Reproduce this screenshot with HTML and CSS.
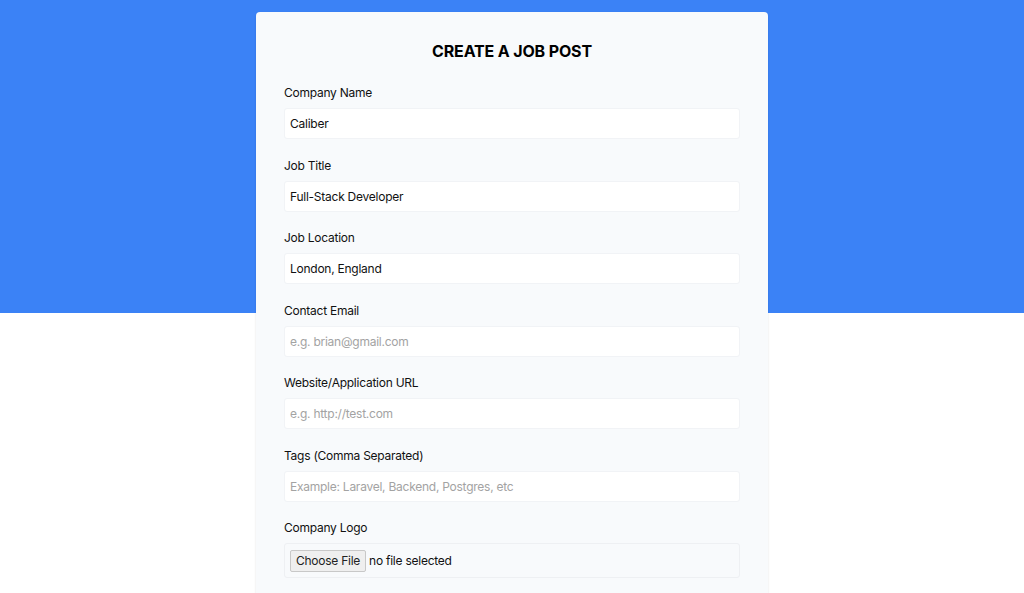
FILE: index.html
```html
<!DOCTYPE html>
<html lang="en">
<head>
<meta charset="utf-8">
<title>Create a Job Post</title>
<link rel="stylesheet" href="styles.css">
</head>
<body>
<main class="page">
  <form class="card">
    <h1 class="title">CREATE A JOB POST</h1>
    <div class="field">
      <label class="label">Company Name</label>
      <div class="input">Caliber</div>
    </div>
    <div class="field">
      <label class="label">Job Title</label>
      <div class="input">Full-Stack Developer</div>
    </div>
    <div class="field">
      <label class="label">Job Location</label>
      <div class="input">London, England</div>
    </div>
    <div class="field">
      <label class="label">Contact Email</label>
      <div class="input placeholder">e.g. brian@gmail.com</div>
    </div>
    <div class="field">
      <label class="label">Website/Application URL</label>
      <div class="input placeholder">e.g. http://test.com</div>
    </div>
    <div class="field">
      <label class="label">Tags (Comma Separated)</label>
      <div class="input placeholder">Example: Laravel, Backend, Postgres, etc</div>
    </div>
    <div class="field">
      <label class="label">Company Logo</label>
      <div class="file">
        <span class="file-btn">Choose File</span>
        <span class="file-text">no file selected</span>
      </div>
    </div>
  </form>
</main>
</body>
</html>
```

FILE: styles.css
```css
html, body {
  margin: 0;
  padding: 0;
}
body {
  background: linear-gradient(to bottom, #3b82f6 0, #3b82f6 313px, #ffffff 313px);
  min-height: 593px;
  font-family: Inter, "Noto Sans", "Liberation Sans", sans-serif;
  color: #111827;
}
.page {
  padding-top: 12px;
  display: flex;
  justify-content: center;
}
.card {
  width: 512px;
  box-sizing: border-box;
  background: #f8fafc;
  border-radius: 4px;
  padding: 25px 28px 40px;
  box-shadow: 0 1px 3px rgba(0,0,0,0.08), 0 1px 2px rgba(0,0,0,0.04);
  display: flex;
  flex-direction: column;
}
.title {
  margin: 0 0 18px;
  text-align: center;
  font-size: 16px;
  line-height: 28px;
  font-weight: 700;
  color: #000;
  letter-spacing: -0.15px;
}
.field {
  display: flex;
  flex-direction: column;
  margin-bottom: 16.5px;
}
.label {
  font-size: 12px;
  line-height: 20px;
  letter-spacing: -0.25px;
  margin-bottom: 5px;
  color: #111;
}
.input {
  height: 31px;
  box-sizing: border-box;
  background: #ffffff;
  border: 1px solid #f1f3f6;
  border-radius: 3px;
  padding: 0 5px;
  font-size: 12px;
  letter-spacing: -0.25px;
  line-height: 29px;
  color: #111;
}
.placeholder {
  color: #a3a3a3;
}
.file {
  height: 35px;
  box-sizing: border-box;
  border: 1px solid #eef0f3;
  border-radius: 3px;
  display: flex;
  align-items: center;
  padding: 0 5px;
  gap: 3px;
  font-size: 12px;
  letter-spacing: -0.25px;
}
.file-btn {
  background: #efefef;
  border: 1px solid #c8c8c8;
  border-radius: 2px;
  padding: 0 5px;
  height: 22px;
  line-height: 20px;
  box-sizing: border-box;
  color: #222;
}
.file-text {
  color: #111;
}
```
